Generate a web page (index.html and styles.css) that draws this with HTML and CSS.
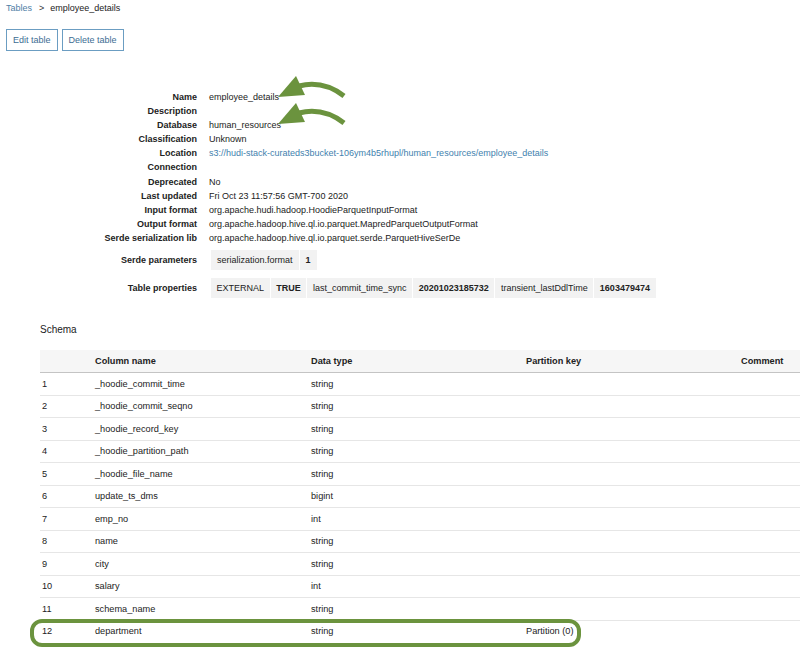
FILE: index.html
```html
<!DOCTYPE html>
<html>
<head>
<meta charset="utf-8">
<link rel="stylesheet" href="styles.css">
</head>
<body>
<div class="page">
  <nav class="crumbs"><a class="crumb-link">Tables</a><span class="sep">&gt;</span><span class="crumb-cur">employee_details</span></nav>
  <div class="actions">
    <button class="btn">Edit table</button>
    <button class="btn">Delete table</button>
  </div>
  <div class="details-wrap">
    <dl class="details">
      <dt>Name</dt><dd>employee_details</dd>
      <dt>Description</dt><dd></dd>
      <dt>Database</dt><dd>human_resources</dd>
      <dt>Classification</dt><dd>Unknown</dd>
      <dt>Location</dt><dd><a class="link">s3://hudi-stack-curateds3bucket-106ym4b5rhupl/human_resources/employee_details</a></dd>
      <dt>Connection</dt><dd></dd>
      <dt>Deprecated</dt><dd>No</dd>
      <dt>Last updated</dt><dd>Fri Oct 23 11:57:56 GMT-700 2020</dd>
      <dt>Input format</dt><dd>org.apache.hudi.hadoop.HoodieParquetInputFormat</dd>
      <dt>Output format</dt><dd>org.apache.hadoop.hive.ql.io.parquet.MapredParquetOutputFormat</dd>
      <dt>Serde serialization lib</dt><dd>org.apache.hadoop.hive.ql.io.parquet.serde.ParquetHiveSerDe</dd>
      <dt class="chip-label first">Serde parameters</dt>
      <dd class="chips first"><span class="chip">serialization.format</span><span class="chip b">1</span></dd>
      <dt class="chip-label second">Table properties</dt>
      <dd class="chips second"><span class="chip">EXTERNAL</span><span class="chip b">TRUE</span><span class="chip">last_commit_time_sync</span><span class="chip b">20201023185732</span><span class="chip">transient_lastDdlTime</span><span class="chip b">1603479474</span></dd>
    </dl>
    <svg class="arrows" width="80" height="60" viewBox="0 0 80 60">
      <g fill="#6b933e" stroke="#6b933e">
        <path d="M25 11 Q49 5 70 21" fill="none" stroke-width="5"/>
        <polygon points="22,1 4,22 31,20" stroke="none"/>
        <path d="M25 38 Q49 32 70 48" fill="none" stroke-width="5"/>
        <polygon points="22,28 4,49 31,47" stroke="none"/>
      </g>
    </svg>
  </div>
  <h2 class="schema-title">Schema</h2>
  <div class="table-wrap">
    <table class="schema">
      <colgroup>
        <col class="c-num"><col class="c-name"><col class="c-type"><col class="c-part"><col class="c-comment">
      </colgroup>
      <thead>
        <tr><th></th><th>Column name</th><th>Data type</th><th>Partition key</th><th>Comment</th></tr>
      </thead>
      <tbody>
        <tr><td>1</td><td>_hoodie_commit_time</td><td>string</td><td></td><td></td></tr>
        <tr><td>2</td><td>_hoodie_commit_seqno</td><td>string</td><td></td><td></td></tr>
        <tr><td>3</td><td>_hoodie_record_key</td><td>string</td><td></td><td></td></tr>
        <tr><td>4</td><td>_hoodie_partition_path</td><td>string</td><td></td><td></td></tr>
        <tr><td>5</td><td>_hoodie_file_name</td><td>string</td><td></td><td></td></tr>
        <tr><td>6</td><td>update_ts_dms</td><td>bigint</td><td></td><td></td></tr>
        <tr><td>7</td><td>emp_no</td><td>int</td><td></td><td></td></tr>
        <tr><td>8</td><td>name</td><td>string</td><td></td><td></td></tr>
        <tr><td>9</td><td>city</td><td>string</td><td></td><td></td></tr>
        <tr><td>10</td><td>salary</td><td>int</td><td></td><td></td></tr>
        <tr><td>11</td><td>schema_name</td><td>string</td><td></td><td></td></tr>
        <tr class="last"><td>12</td><td>department</td><td>string</td><td>Partition (0)</td><td></td></tr>
      </tbody>
    </table>
    <div class="highlight"></div>
  </div>
</div>
</body>
</html>
```

FILE: styles.css
```css
html, body {
  margin: 0;
  padding: 0;
  background: #ffffff;
}
body {
  font-family: "Liberation Sans", Arial, sans-serif;
  color: #222;
  font-size: 9px;
}
.page {
  width: 800px;
  height: 654px;
  overflow: hidden;
}
.crumbs {
  display: flex;
  align-items: center;
  padding: 2px 6px 0;
  height: 12px;
  font-size: 9px;
  line-height: 12px;
}
.crumb-link {
  color: #4f7ea6;
}
.sep {
  margin: 0 6px 0 7px;
  color: #333;
}
.crumb-cur {
  color: #222;
}
.actions {
  display: flex;
  gap: 4px;
  padding-left: 6px;
  margin-top: 15px;
}
.btn {
  height: 22px;
  padding: 0 6px;
  border: 1px solid #6b9dc2;
  background: #fff;
  color: #3d6d93;
  font-family: inherit;
  font-size: 9px;
  border-radius: 0;
}
.details-wrap {
  position: relative;
  padding-top: 39px;
}
.details {
  display: grid;
  grid-template-columns: 191px 1fr;
  column-gap: 12px;
  margin: 0 0 0 6px;
  line-height: 14.1px;
}
.details dt {
  font-weight: bold;
  text-align: right;
  color: #222;
}
.details dd {
  margin: 0;
  min-height: 14.1px;
  color: #222;
}
.link {
  color: #3f7fae;
}
.details dt.chip-label {
  line-height: 20px;
}
.details .first {
  margin-top: 5px;
}
.details .second {
  margin-top: 8px;
}
.chips {
  display: flex;
  gap: 1px;
  margin-left: 2px !important;
}
.chip {
  display: inline-block;
  height: 20px;
  line-height: 20px;
  padding: 0 6px;
  background: #f2f2f2;
}
.chips.second .chip {
  padding: 0 5.6px;
}
.chip.b {
  font-weight: bold;
}
.arrows {
  position: absolute;
  left: 274px;
  top: 24px;
}
.schema-title {
  margin: 25px 0 0 40px;
  font-size: 10px;
  font-weight: normal;
  line-height: 14px;
  color: #222;
}
.table-wrap {
  position: relative;
  margin-top: 13px;
  margin-left: 40px;
}
.schema {
  border-collapse: collapse;
  width: 760px;
  table-layout: fixed;
  font-size: 9.2px;
}
.c-num { width: 53px; }
.c-name { width: 216px; }
.c-type { width: 215px; }
.c-part { width: 215px; }
.c-comment { width: 61px; }
.schema th {
  height: 22px;
  background: #f6f6f6;
  border-bottom: 1px solid #c4c4c4;
  font-weight: bold;
  text-align: left;
  padding: 0 0 0 2px;
  white-space: nowrap;
}
.schema td {
  height: 21.5px;
  border-bottom: 1px solid #e6e6e6;
  padding: 0 0 0 2px;
  color: #222;
  white-space: nowrap;
}
.schema tr.last td {
  border-bottom: none;
}
.highlight {
  position: absolute;
  left: -10px;
  top: 269px;
  width: 543px;
  height: 20px;
  border: 4px solid #6b933e;
  border-radius: 12px;
}
```
